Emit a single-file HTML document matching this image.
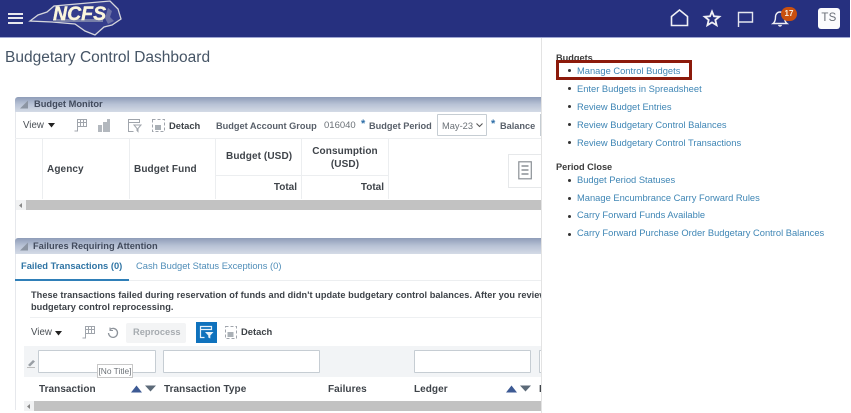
<!DOCTYPE html>
<html><head><meta charset="utf-8"><style>
html,body{margin:0;padding:0;background:#fff;}
#p{position:relative;width:851px;height:413px;overflow:hidden;background:#fff;font-family:"Liberation Sans",sans-serif;color:#3a3f45;filter:blur(0.35px);}
.t{position:absolute;white-space:nowrap;font-size:9.3px;line-height:12px;}
.b{font-weight:bold;}
.r{position:absolute;}
.l{color:#3f86b5;font-size:9.35px;}
.d{position:absolute;width:3px;height:3px;border-radius:50%;background:#333;}
.hd{background:linear-gradient(#8e9cb8,#b9c3d6 50%,#d4dbe6);}
svg{position:absolute;overflow:visible;}
.inp{position:absolute;background:#fff;border:1px solid #c6cdd3;box-sizing:border-box;border-radius:1px;}
</style></head><body><div id="p">

<!-- header -->
<div class="r" style="left:0;top:0;width:850px;height:37px;background:#26307f;border-bottom:1px solid #9fa6d2;"></div>
<div class="r" style="left:8px;top:13px;width:15px;height:2px;background:#e8e8ee;"></div>
<div class="r" style="left:8px;top:17px;width:15px;height:2px;background:#e8e8ee;"></div>
<div class="r" style="left:8px;top:22px;width:15px;height:2px;background:#e8e8ee;"></div>
<!-- logo -->
<svg style="left:0;top:0" width="130" height="38" viewBox="0 0 130 38">
<path d="M30 21 L38 15 L47 12 L54 6 L110 1 L118 9 L121 19 L112 25 L104 27 L95 35 L85 31 L75 24 L52 22 Z" fill="#343d8c" stroke="#d5d6dc" stroke-width="1.3"/>
<path d="M108 8l4 3-2 6 4 4-6 3-3-6z" fill="#6a70a6"/>
<rect x="53" y="19" width="50" height="3" fill="#777fa8"/>
</svg>
<div class="t" style="left:53px;top:3px;font-size:19.5px;line-height:22px;font-weight:bold;font-style:italic;color:#fbf6dc;-webkit-text-stroke:.4px #fbf6dc;">NCFS</div>

<!-- header icons -->
<svg style="left:670px;top:9px" width="20" height="18" viewBox="0 0 20 18" fill="none" stroke="#f0f0f5" stroke-width="1.6">
<path d="M1.5 16.5 V7.5 L9.5 1 L17.5 7.5 V16.5 Z"/></svg>
<svg style="left:703px;top:10px" width="18" height="17" viewBox="0 0 18 17" fill="none" stroke="#f0f0f5" stroke-width="1.8">
<path d="M9 1.5 L11 6.3 L16.3 6.7 L12.3 10 L13.6 15.2 L9 12.4 L4.4 15.2 L5.7 10 L1.7 6.7 L7 6.3 Z"/></svg>
<svg style="left:737px;top:11px" width="17" height="16" viewBox="0 0 17 16" fill="none" stroke="#e4e5ee" stroke-width="1.4">
<path d="M1.5 16 V1.5 H15.5 V11 H1.5"/></svg>
<svg style="left:772px;top:10px" width="17" height="17" viewBox="0 0 17 17" fill="none" stroke="#f0f0f5" stroke-width="1.4">
<path d="M1 13.5 C3 12 3.5 10 3.5 7 C3.5 4 5.5 2 8 2 C10.5 2 12.5 4 12.5 7 C12.5 10 13 12 15 13.5 Z"/><path d="M6.5 15 Q8 17 9.5 15"/></svg>
<div class="r" style="left:781px;top:7px;width:16px;height:14px;border-radius:8px;background:#c9500f;"></div>
<div class="t b" style="left:781px;top:8px;width:16px;text-align:center;font-size:8px;line-height:12px;color:#f7efe0;">17</div>
<div class="r" style="left:818px;top:8px;width:22px;height:21px;background:#fbfbfd;border-radius:3px;"></div>
<div class="t" style="left:818px;top:12px;width:22px;text-align:center;font-size:11.5px;line-height:13px;color:#6a6f78;letter-spacing:.3px;">TS</div>

<!-- title -->
<div class="t" style="left:5px;top:48px;font-size:15.5px;line-height:20px;color:#465566;">Budgetary Control Dashboard</div>

<!-- budget monitor panel -->
<div class="r hd" style="left:15px;top:97px;width:526px;height:15px;border-radius:3px 0 0 0;"></div>
<div class="r" style="left:15px;top:112px;width:1px;height:298px;background:#e6e8ec;"></div>
<svg style="left:20px;top:100px" width="9" height="9"><path d="M0 8.5 L8 8.5 L8 0.5 Z" fill="#8c95a3"/></svg>
<div class="t b" style="left:34px;top:98px;color:#414a5c;">Budget Monitor</div>

<div class="t" style="left:23px;top:120px;font-size:9.7px;color:#4a4f55;">View</div>
<svg style="left:48px;top:123px" width="7" height="5"><path d="M0 0H7L3.5 4.5Z" fill="#222"/></svg>
<svg style="left:74px;top:119px" width="13" height="13" fill="none" stroke="#a0a5ac"><path d="M3.5 .5h9v7h-9zM6.5 .5v7M9.5 .5v7M3.5 3.5h9M.5 12h3V7"/></svg>
<svg style="left:98px;top:119px" width="13" height="13" fill="#b3b8be"><path d="M0 6h4v7H0zM5 3h4v10H5zM9 0h3v13H9z"/></svg>
<svg style="left:128px;top:119px" width="13" height="13" fill="none" stroke="#a0a5ac"><path d="M.5 .5h11v3H.5zM.5 3.5v9h5M6 6h7l-3 3.5v3l-1-1v-2z"/></svg>
<svg style="left:152px;top:119px" width="13" height="13" fill="none" stroke="#a0a5ac"><rect x=".5" y=".5" width="12" height="12" stroke-dasharray="3 2"/><rect x="3" y="6" width="6" height="5" fill="#aab0b6" stroke="none"/></svg>
<div class="t b" style="left:169px;top:120px;font-size:9.4px;color:#3d4247;">Detach</div>
<div class="t b" style="left:216px;top:120px;font-size:9.2px;color:#59606a;">Budget Account Group</div>
<div class="t" style="left:324px;top:120px;font-size:9.5px;color:#6b7177;">016040</div>
<div class="t b" style="left:361px;top:118px;font-size:11px;color:#2e6fa8;">*</div>
<div class="t b" style="left:369px;top:120px;font-size:9.2px;color:#59606a;">Budget Period</div>
<div class="inp" style="left:437px;top:114px;width:50px;height:22px;"></div>
<div class="t" style="left:442px;top:120px;font-size:9.3px;color:#6b7177;">May-23</div>
<svg style="left:476px;top:123px" width="7" height="5" fill="none" stroke="#555" stroke-width="1.1"><path d="M.5 .5L3.5 3.5L6.5 .5"/></svg>
<div class="t b" style="left:491px;top:118px;font-size:11px;color:#2e6fa8;">*</div>
<div class="t b" style="left:500px;top:120px;font-size:9.2px;color:#59606a;">Balance</div>
<div class="r" style="left:540px;top:114px;width:1px;height:22px;background:#c6cdd3;"></div>

<!-- table lines -->
<div class="r" style="left:15px;top:138px;width:526px;height:1px;background:#eceef0;"></div>
<div class="r" style="left:42px;top:139px;width:1px;height:60px;background:#eceef0;"></div>
<div class="r" style="left:129px;top:139px;width:1px;height:60px;background:#eceef0;"></div>
<div class="r" style="left:215px;top:139px;width:1px;height:60px;background:#eceef0;"></div>
<div class="r" style="left:301px;top:139px;width:1px;height:60px;background:#eceef0;"></div>
<div class="r" style="left:388px;top:139px;width:1px;height:60px;background:#eceef0;"></div>
<div class="r" style="left:215px;top:175px;width:173px;height:1px;background:#eceef0;"></div>
<div class="t b" style="left:47px;top:164px;font-size:10px;letter-spacing:.1px;color:#3f444a;">Agency</div>
<div class="t b" style="left:134px;top:164px;font-size:10px;letter-spacing:.1px;color:#3f444a;">Budget Fund</div>
<div class="t b" style="left:226px;top:151px;font-size:10px;letter-spacing:.1px;color:#3f444a;">Budget (USD)</div>
<div class="t b" style="left:302px;top:146px;width:86px;text-align:center;font-size:10px;letter-spacing:.1px;line-height:12.5px;color:#3f444a;">Consumption<br>(USD)</div>
<div class="t b" style="left:250px;top:182px;width:47px;text-align:right;font-size:10px;color:#3f444a;">Total</div>
<div class="t b" style="left:337px;top:182px;width:47px;text-align:right;font-size:10px;color:#3f444a;">Total</div>

<!-- scroll 1 -->
<div class="r" style="left:16px;top:200px;width:10px;height:10px;background:#f1f2f3;"></div>
<svg style="left:19px;top:203px" width="4" height="5"><path d="M3 0V5L0 2.5Z" fill="#888"/></svg>
<div class="r" style="left:26px;top:200px;width:515px;height:10px;background:#c2c2c2;"></div>

<!-- side tab -->
<div class="r" style="left:508px;top:154px;width:33px;height:34px;background:#fff;border:1px solid #e6e8ea;border-right:0;box-sizing:border-box;"></div>
<svg style="left:518px;top:161px" width="15" height="20" fill="none" stroke="#8b9096" stroke-width="1.2"><rect x=".8" y=".8" width="12.5" height="17" /><path d="M3.5 5h7M3.5 9h7M3.5 13h7" stroke-width="1.4"/></svg>

<!-- failures panel -->
<div class="r hd" style="left:15px;top:238px;width:526px;height:16px;border-radius:3px 0 0 0;"></div>
<svg style="left:20px;top:242px" width="9" height="9"><path d="M0 8.5 L8 8.5 L8 0.5 Z" fill="#8c95a3"/></svg>
<div class="t b" style="left:33px;top:240px;color:#414a5c;">Failures Requiring Attention</div>

<div class="t b" style="left:21px;top:260px;font-size:9.35px;color:#2f74a4;">Failed Transactions (0)</div>
<div class="t" style="left:136px;top:260px;font-size:9.35px;color:#4f8db8;">Cash Budget Status Exceptions (0)</div>
<div class="r" style="left:15px;top:280px;width:526px;height:1px;background:#eceef0;"></div>
<div class="r" style="left:15px;top:279px;width:114px;height:2px;background:#2f7fb8;"></div>

<div class="t b" style="left:31px;top:290px;font-size:9.2px;line-height:11.5px;letter-spacing:.05px;color:#3d4248;">These transactions failed during reservation of funds and didn't update budgetary control balances. After you review<br>budgetary control reprocessing.</div>
<div class="r" style="left:30px;top:317px;width:511px;height:1px;background:#eef0f2;"></div>

<div class="t" style="left:31px;top:327px;font-size:9.7px;color:#4a4f55;">View</div>
<svg style="left:55px;top:331px" width="7" height="5"><path d="M0 0H7L3.5 4.5Z" fill="#222"/></svg>
<svg style="left:82px;top:326px" width="13" height="13" fill="none" stroke="#a0a5ac"><path d="M3.5 .5h9v7h-9zM6.5 .5v7M9.5 .5v7M3.5 3.5h9M.5 12h3V7"/></svg>
<svg style="left:107px;top:327px" width="12" height="12" fill="none" stroke="#8d939b" stroke-width="1.3"><path d="M3 2.5A4.5 4.5 0 1 1 1.5 6"/><path d="M3 .5v3h3" stroke-width="1"/></svg>
<div class="r" style="left:126px;top:323px;width:60px;height:20px;background:#f3f4f5;border-radius:2px;"></div>
<div class="t b" style="left:133px;top:326px;font-size:9.3px;color:#a6abb0;">Reprocess</div>
<div class="r" style="left:196px;top:322px;width:21px;height:21px;background:#0f72bd;"></div>
<svg style="left:200px;top:326px" width="14" height="14" fill="none" stroke="#e8f2fa" stroke-width="1.2"><path d="M.5 .5h11v3H.5zM.5 3.5v8h4"/><path d="M5 6h8.5l-3.2 3.5v3l-2-1v-2z" fill="#e8f2fa" stroke="none"/></svg>
<svg style="left:225px;top:326px" width="13" height="13" fill="none" stroke="#a0a5ac"><rect x=".5" y=".5" width="11" height="12" stroke-dasharray="3 2"/><rect x="2.5" y="6" width="6" height="5" fill="#aab0b6" stroke="none"/></svg>
<div class="t b" style="left:241px;top:326px;font-size:9.4px;color:#3d4247;">Detach</div>

<!-- filter row -->
<div class="r" style="left:24px;top:346px;width:517px;height:31px;background:#f2f4f6;"></div>
<svg style="left:27px;top:358px" width="9" height="10"><path d="M1 7L6 2L8 3.5L3 8.5Z" fill="#9a9fa5"/><rect x="0" y="9" width="8" height="1" fill="#bbb"/></svg>
<div class="inp" style="left:38px;top:350px;width:118px;height:23px;"></div>
<div class="inp" style="left:163px;top:350px;width:157px;height:23px;"></div>
<div class="inp" style="left:414px;top:350px;width:117px;height:23px;"></div>
<div class="inp" style="left:539px;top:350px;width:8px;height:23px;border-right:0;"></div>

<div class="r" style="left:97px;top:364px;width:36px;height:14px;background:#fff;border:1px solid #c8c8c8;box-sizing:border-box;"></div>
<div class="t" style="left:97px;top:365px;width:36px;text-align:center;font-size:8.4px;color:#6e7378;">[No Title]</div>

<div class="t b" style="left:39px;top:384px;font-size:10px;letter-spacing:.05px;color:#3f444a;">Transaction</div>
<svg style="left:131px;top:385px" width="26" height="8"><path d="M0 7.5L5.5 .5L11 7.5Z" fill="#3d5a94"/><path d="M14 .5H25L19.5 6.5Z" fill="#5c6a78"/></svg>
<div class="t b" style="left:164px;top:384px;font-size:10px;letter-spacing:.05px;color:#3f444a;">Transaction Type</div>
<div class="t b" style="left:328px;top:384px;font-size:10px;letter-spacing:.05px;color:#3f444a;">Failures</div>
<div class="t b" style="left:414px;top:384px;font-size:10px;letter-spacing:.05px;color:#3f444a;">Ledger</div>
<svg style="left:506px;top:385px" width="26" height="8"><path d="M0 7.5L5.5 .5L11 7.5Z" fill="#3d5a94"/><path d="M14 .5H25L19.5 6.5Z" fill="#5c6a78"/></svg>
<div class="t b" style="left:539px;top:384px;font-size:10px;color:#3f444a;">E</div>

<div class="r" style="left:24px;top:401px;width:10px;height:10px;background:#f1f2f3;"></div>
<svg style="left:27px;top:404px" width="4" height="5"><path d="M3 0V5L0 2.5Z" fill="#888"/></svg>
<div class="r" style="left:34px;top:401px;width:507px;height:10px;background:#c2c2c2;"></div>

<!-- right panel -->
<div class="r" style="left:541px;top:38px;width:310px;height:375px;background:#fff;border-left:1px solid #e3e3e3;box-sizing:border-box;"></div>
<div class="t b" style="left:556px;top:52px;font-size:9.2px;color:#3c3c3c;">Budgets</div>
<div class="r" style="left:556px;top:60px;width:136px;height:20px;border:3px solid #8c1a0b;box-sizing:border-box;"></div>

<div class="d" style="left:568px;top:69px;"></div>
<div class="t l" style="left:577px;top:65px;">Manage Control Budgets</div>
<div class="d" style="left:568px;top:87px;"></div>
<div class="t l" style="left:577px;top:83px;">Enter Budgets in Spreadsheet</div>
<div class="d" style="left:568px;top:105px;"></div>
<div class="t l" style="left:577px;top:101px;">Review Budget Entries</div>
<div class="d" style="left:568px;top:123px;"></div>
<div class="t l" style="left:577px;top:119px;">Review Budgetary Control Balances</div>
<div class="d" style="left:568px;top:141px;"></div>
<div class="t l" style="left:577px;top:137px;">Review Budgetary Control Transactions</div>

<div class="t b" style="left:556px;top:161px;font-size:9.2px;color:#3c3c3c;">Period Close</div>
<div class="d" style="left:568px;top:179px;"></div>
<div class="t l" style="left:577px;top:174px;">Budget Period Statuses</div>
<div class="d" style="left:568px;top:197px;"></div>
<div class="t l" style="left:577px;top:192px;">Manage Encumbrance Carry Forward Rules</div>
<div class="d" style="left:568px;top:215px;"></div>
<div class="t l" style="left:577px;top:209px;">Carry Forward Funds Available</div>
<div class="d" style="left:568px;top:233px;"></div>
<div class="t l" style="left:577px;top:227px;">Carry Forward Purchase Order Budgetary Control Balances</div>

</div></body></html>
